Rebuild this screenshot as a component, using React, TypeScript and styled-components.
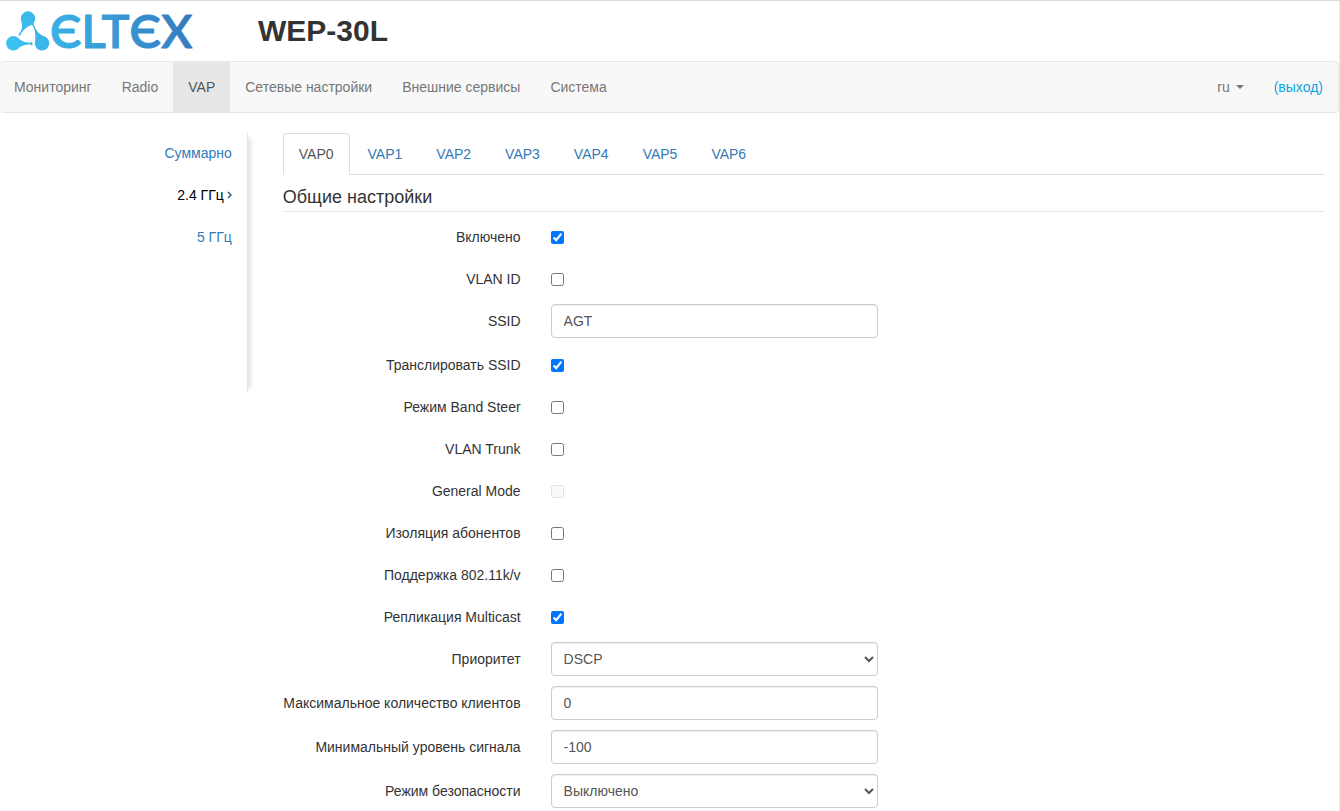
import React from "react";
import styled, { createGlobalStyle, css } from "styled-components";

const GlobalStyle = createGlobalStyle`
  *, *::before, *::after { box-sizing: border-box; }
  body {
    margin: 0;
    background: #fff;
    color: #333;
    font: 14px/20px "Liberation Sans", Arial, sans-serif;
  }
  a { color: #337ab7; text-decoration: none; }
`;

const Page = styled.div`
  min-height: 100vh;
  border-top: 1px solid #d9d9d9;
  border-right: 1px solid #eee;
`;

const Header = styled.header`
  display: flex;
  align-items: center;
  height: 60px;
  padding-left: 6px;
`;

const Logo = styled.svg`
  flex: none;
  width: 192px;
  height: 60px;
  overflow: visible;
`;

const Wordmark = styled.text`
  font-family: Lato, "Liberation Sans", sans-serif;
  font-size: 47px;
  font-weight: 600;
  stroke: url(#brand);
  stroke-width: 1px;
  stroke-linejoin: round;
`;

const Title = styled.h1`
  margin: 0 0 0 60px;
  font-size: 30px;
  line-height: 34px;
  font-weight: bold;
`;

const NavBar = styled.nav`
  display: flex;
  justify-content: space-between;
  border: 1px solid #e7e7e7;
  border-left: 0;
  border-radius: 4px;
  background: #f8f8f8;
`;

const NavGroup = styled.div`
  display: flex;

  &:first-child a:first-child { padding-left: 14px; }
`;

const navItem = css`
  padding: 15px;
  color: #777;
`;

const NavLink = styled.a<{ $active?: boolean }>`
  ${navItem}
  color: ${(p) => (p.$active ? "#555" : "#777")};
  background: ${(p) => (p.$active ? "#e7e7e7" : "transparent")};
`;

const LanguageButton = styled.button`
  ${navItem}
  display: flex;
  align-items: center;
  gap: 6px;
  border: 0;
  background: none;
  font: inherit;
`;

const Caret = styled.span`
  border: 4px solid transparent;
  border-top-color: #777;
  border-bottom: 0;
`;

const LogoutLink = styled.a`
  ${navItem}
  color: #0aa5df;
`;

const Body = styled.div`
  display: grid;
  grid-template-columns: 20% 80%;
  padding-top: 20px;
`;

const Sidebar = styled.aside`
  height: 260px;
  margin-right: 20px;
  border-right: 1px solid #e7e7e7;
  box-shadow: 7px 0 5px -5px rgba(0, 0, 0, 0.15);
`;

const SideLink = styled.a<{ $active?: boolean }>`
  display: flex;
  justify-content: flex-end;
  align-items: center;
  gap: 3px;
  padding: 10px 15px 12px 0;
  color: ${(p) => (p.$active ? "#000" : "#337ab7")};
`;

const Content = styled.main`
  min-width: 0;
  padding: 0 15px;
`;

const Tabs = styled.div`
  display: flex;
  gap: 2px;
  border-bottom: 1px solid #ddd;
`;

const Tab = styled.a<{ $active?: boolean }>`
  margin-bottom: -1px;
  padding: 10px 15px;
  border: 1px solid ${(p) => (p.$active ? "#ddd" : "transparent")};
  border-bottom-color: ${(p) => (p.$active ? "#fff" : "transparent")};
  border-radius: 4px 4px 0 0;
  background: ${(p) => (p.$active ? "#fff" : "transparent")};
  color: ${(p) => (p.$active ? "#555" : "#337ab7")};
`;

const SectionTitle = styled.h2`
  margin: 10px 0 8px;
  padding-bottom: 2px;
  border-bottom: 1px solid #e5e5e5;
  font-size: 18px;
  line-height: 24px;
  font-weight: normal;
`;

const Form = styled.form`
  margin: 0 -15px;
`;

const Row = styled.div`
  display: grid;
  grid-template-columns: 25% 33.3333%;
  align-items: start;
  min-height: 32px;
  margin-bottom: 10px;

  &:last-child { margin-bottom: 0; }
`;

const Label = styled.label`
  padding: 7px 15px 0 0;
  text-align: right;
  white-space: nowrap;
`;

const Control = styled.div`
  display: flex;
  padding: 0 15px;
`;

const Checkbox = styled.input`
  width: 13px;
  height: 13px;
  margin: 11px 0 0;

  &:disabled { opacity: 0.6; }
`;

const field = css`
  width: 100%;
  height: 34px;
  border: 1px solid #ccc;
  border-radius: 4px;
  background: #fff;
  box-shadow: inset 0 1px 1px rgba(0, 0, 0, 0.075);
  color: #555;
  font: inherit;
`;

const TextInput = styled.input`
  ${field}
  padding: 6px 12px;
`;

const Select = styled.select`
  ${field}
  padding: 6px 8px;
`;

const EltexLogo = () => (
  <Logo viewBox="0 -8 192 60" role="img" aria-label="ELTEX">
    <defs>
      <linearGradient id="brand" gradientUnits="userSpaceOnUse" x1="0" y1="40" x2="190" y2="10">
        <stop offset="0" stopColor="#3bc4f2" />
        <stop offset="1" stopColor="#3579bd" />
      </linearGradient>
    </defs>
    <g fill="url(#brand)">
      <circle cx="22" cy="9.5" r="7.200" />
      <path d="M15 11.5C17.500 18 15.500 22 12.300 25.800L14 27C16 22 19.500 18.500 26 15.500Z" />
      <circle cx="7.300" cy="34.300" r="7.200" />
      <path d="M11 28C15 32 18 33.600 25 33.600V32.800H26.300V36.400H25V35.600C18 35.600 14 37.500 10 41Z" />
      <circle cx="36" cy="34.300" r="7.200" />
      <path d="M25.200 15.800L27.400 13.800C29 20 32 25 38.500 27.600L29 36C29.500 28 30 22 26.600 16.600Z" />
      <Wordmark x="44" y="39">ЄLTЄX</Wordmark>
    </g>
  </Logo>
);

const mainNav = ["Мониторинг", "Radio", "VAP", "Сетевые настройки", "Внешние сервисы", "Система"];
const tabs = ["VAP0", "VAP1", "VAP2", "VAP3", "VAP4", "VAP5", "VAP6"];

type Field = {
  id: string;
  label: string;
  kind: "checkbox" | "text" | "select";
  value?: string;
  checked?: boolean;
  disabled?: boolean;
};

const fields: Field[] = [
  { id: "enabled", label: "Включено", kind: "checkbox", checked: true },
  { id: "vlan-id", label: "VLAN ID", kind: "checkbox" },
  { id: "ssid", label: "SSID", kind: "text", value: "AGT" },
  { id: "broadcast", label: "Транслировать SSID", kind: "checkbox", checked: true },
  { id: "band-steer", label: "Режим Band Steer", kind: "checkbox" },
  { id: "vlan-trunk", label: "VLAN Trunk", kind: "checkbox" },
  { id: "general-mode", label: "General Mode", kind: "checkbox", disabled: true },
  { id: "isolation", label: "Изоляция абонентов", kind: "checkbox" },
  { id: "roaming", label: "Поддержка 802.11k/v", kind: "checkbox" },
  { id: "multicast", label: "Репликация Multicast", kind: "checkbox", checked: true },
  { id: "priority", label: "Приоритет", kind: "select", value: "DSCP" },
  { id: "max-clients", label: "Максимальное количество клиентов", kind: "text", value: "0" },
  { id: "min-signal", label: "Минимальный уровень сигнала", kind: "text", value: "-100" },
  { id: "security", label: "Режим безопасности", kind: "select", value: "Выключено" },
];

const FieldControl = ({ item }: { item: Field }) => {
  if (item.kind === "checkbox") {
    return <Checkbox type="checkbox" id={item.id} defaultChecked={item.checked} disabled={item.disabled} />;
  }
  if (item.kind === "text") {
    return <TextInput type="text" id={item.id} defaultValue={item.value} />;
  }
  return (
    <Select id={item.id} defaultValue={item.value}>
      <option>{item.value}</option>
    </Select>
  );
};

export default function App() {
  return (
    <>
      <GlobalStyle />
      <Page>
        <Header>
          <EltexLogo />
          <Title>WEP-30L</Title>
        </Header>
        <NavBar>
          <NavGroup>
            {mainNav.map((name) => (
              <NavLink key={name} href="#" $active={name === "VAP"}>{name}</NavLink>
            ))}
          </NavGroup>
          <NavGroup>
            <LanguageButton type="button">ru <Caret /></LanguageButton>
            <LogoutLink href="#">(выход)</LogoutLink>
          </NavGroup>
        </NavBar>
        <Body>
          <Sidebar>
            <SideLink href="#">Суммарно</SideLink>
            <SideLink href="#" $active>
              2.4 ГГц
              <svg width="5" height="8" viewBox="0 0 5 8" fill="none" stroke="#23527c" strokeWidth="1.4" aria-hidden="true">
                <path d="M1 1L4 4L1 7" />
              </svg>
            </SideLink>
            <SideLink href="#">5 ГГц</SideLink>
          </Sidebar>
          <Content>
            <Tabs>
              {tabs.map((name) => (
                <Tab key={name} href="#" $active={name === "VAP0"}>{name}</Tab>
              ))}
            </Tabs>
            <SectionTitle>Общие настройки</SectionTitle>
            <Form>
              {fields.map((item) => (
                <Row key={item.id}>
                  <Label htmlFor={item.id}>{item.label}</Label>
                  <Control><FieldControl item={item} /></Control>
                </Row>
              ))}
            </Form>
          </Content>
        </Body>
      </Page>
    </>
  );
}
